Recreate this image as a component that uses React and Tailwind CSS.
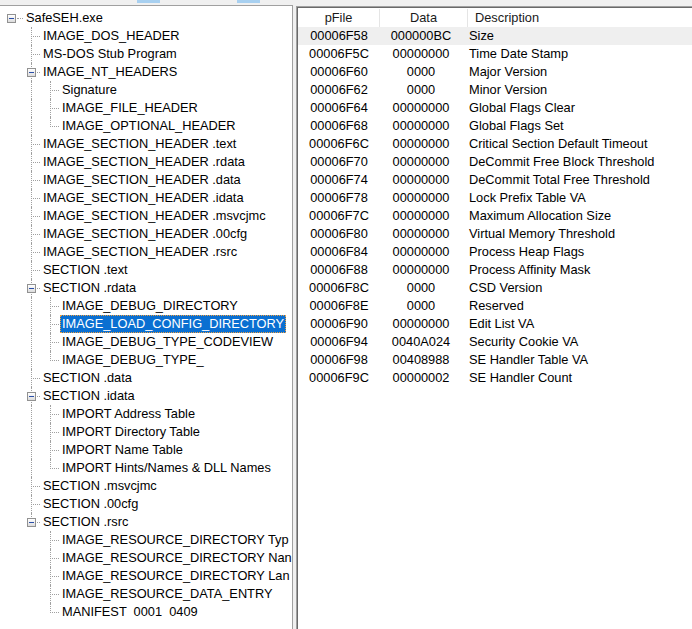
const FONT = { fontFamily: '"Liberation Sans", Arial, sans-serif' }

// level, label, last (among siblings), expanded, up = parent's level-1 guide goes on
const TREE = [
  { level: 0, label: 'SafeSEH.exe', expanded: true },
  { level: 1, label: 'IMAGE_DOS_HEADER' },
  { level: 1, label: 'MS-DOS Stub Program' },
  { level: 1, label: 'IMAGE_NT_HEADERS', expanded: true },
  { level: 2, label: 'Signature', up: true },
  { level: 2, label: 'IMAGE_FILE_HEADER', up: true },
  { level: 2, label: 'IMAGE_OPTIONAL_HEADER', up: true, last: true },
  { level: 1, label: 'IMAGE_SECTION_HEADER .text' },
  { level: 1, label: 'IMAGE_SECTION_HEADER .rdata' },
  { level: 1, label: 'IMAGE_SECTION_HEADER .data' },
  { level: 1, label: 'IMAGE_SECTION_HEADER .idata' },
  { level: 1, label: 'IMAGE_SECTION_HEADER .msvcjmc' },
  { level: 1, label: 'IMAGE_SECTION_HEADER .00cfg' },
  { level: 1, label: 'IMAGE_SECTION_HEADER .rsrc' },
  { level: 1, label: 'SECTION .text' },
  { level: 1, label: 'SECTION .rdata', expanded: true },
  { level: 2, label: 'IMAGE_DEBUG_DIRECTORY', up: true },
  { level: 2, label: 'IMAGE_LOAD_CONFIG_DIRECTORY', up: true, selected: true },
  { level: 2, label: 'IMAGE_DEBUG_TYPE_CODEVIEW', up: true },
  { level: 2, label: 'IMAGE_DEBUG_TYPE_', up: true, last: true },
  { level: 1, label: 'SECTION .data' },
  { level: 1, label: 'SECTION .idata', expanded: true },
  { level: 2, label: 'IMPORT Address Table', up: true },
  { level: 2, label: 'IMPORT Directory Table', up: true },
  { level: 2, label: 'IMPORT Name Table', up: true },
  { level: 2, label: 'IMPORT Hints/Names & DLL Names', up: true, last: true },
  { level: 1, label: 'SECTION .msvcjmc' },
  { level: 1, label: 'SECTION .00cfg' },
  { level: 1, label: 'SECTION .rsrc', expanded: true, last: true },
  { level: 2, label: 'IMAGE_RESOURCE_DIRECTORY Typ' },
  { level: 2, label: 'IMAGE_RESOURCE_DIRECTORY Nan' },
  { level: 2, label: 'IMAGE_RESOURCE_DIRECTORY Lan' },
  { level: 2, label: 'IMAGE_RESOURCE_DATA_ENTRY' },
  { level: 2, label: 'MANIFEST  0001  0409', last: true },
]

const ROWS = [
  ['00006F58', '000000BC', 'Size'],
  ['00006F5C', '00000000', 'Time Date Stamp'],
  ['00006F60', '0000', 'Major Version'],
  ['00006F62', '0000', 'Minor Version'],
  ['00006F64', '00000000', 'Global Flags Clear'],
  ['00006F68', '00000000', 'Global Flags Set'],
  ['00006F6C', '00000000', 'Critical Section Default Timeout'],
  ['00006F70', '00000000', 'DeCommit Free Block Threshold'],
  ['00006F74', '00000000', 'DeCommit Total Free Threshold'],
  ['00006F78', '00000000', 'Lock Prefix Table VA'],
  ['00006F7C', '00000000', 'Maximum Allocation Size'],
  ['00006F80', '00000000', 'Virtual Memory Threshold'],
  ['00006F84', '00000000', 'Process Heap Flags'],
  ['00006F88', '00000000', 'Process Affinity Mask'],
  ['00006F8C', '0000', 'CSD Version'],
  ['00006F8E', '0000', 'Reserved'],
  ['00006F90', '00000000', 'Edit List VA'],
  ['00006F94', '0040A024', 'Security Cookie VA'],
  ['00006F98', '00408988', 'SE Handler Table VA'],
  ['00006F9C', '00000002', 'SE Handler Count'],
]

function ExpandBox({ className }) {
  return (
    <div
      className={`w-[9px] h-[9px] border border-[#919191] bg-gradient-to-b from-white to-[#dcdcdc] flex items-center justify-center ${className}`}
    >
      <div className="w-[5px] h-[1px] bg-[#2b4fa8]" />
    </div>
  )
}

// pass-through cell: only an ancestor's vertical guide
function GuideCell({ on }) {
  return (
    <div className="w-[19px] h-[18px] shrink-0 flex">
      {on && <div className="ml-[10px] h-full border-l border-dotted border-[#a0a0a0]" />}
    </div>
  )
}

function OwnCell({ last, expanded }) {
  return (
    <div className="relative w-[19px] h-[18px] shrink-0">
      <div
        className={`absolute left-[10px] top-0 border-l border-dotted border-[#a0a0a0] ${last ? 'h-[10px]' : 'h-[18px]'}`}
      />
      <div className="absolute left-[10px] top-[9px] w-[9px] border-t border-dotted border-[#a0a0a0]" />
      {expanded && <ExpandBox className="absolute left-[6px] top-[5px]" />}
    </div>
  )
}

function TreeRow({ node }) {
  if (node.level === 0) {
    return (
      <div className="flex items-center h-[18px] pl-[7px]">
        <ExpandBox />
        <div className="w-[6px] ml-[1px] border-t border-dotted border-[#a0a0a0]" />
        <span className="ml-[1px] px-[2px] leading-[18px] whitespace-nowrap">{node.label}</span>
      </div>
    )
  }
  return (
    <div className="flex items-center h-[18px] pl-[21px]">
      {node.level === 2 && <GuideCell on={node.up} />}
      <OwnCell last={node.last} expanded={node.expanded} />
      <span
        className={`ml-[1px] px-[1px] h-[18px] leading-[16px] whitespace-pre border ${
          node.selected
            ? 'bg-[#0a6fd1] text-white border-dotted border-[#f0a040]'
            : 'border-transparent'
        }`}
      >
        {node.label}
      </span>
    </div>
  )
}

export default function App() {
  return (
    <div
      className="w-[692px] h-[629px] bg-[#f0f0f0] text-black text-[12.8px] overflow-hidden flex flex-col"
      style={FONT}
    >
      {/* toolbar remnants */}
      <div className="h-[5px] shrink-0 flex">
        <div className="ml-[137px] w-[23px] h-[3px] bg-[#a8d0f0]" />
        <div className="ml-[77px] w-[23px] h-[3px] bg-[#a8d0f0]" />
      </div>

      <div className="flex flex-1 min-h-0">
        {/* tree */}
        <div className="w-[293px] shrink-0 bg-white border-t border-r border-[#a0a0a0] overflow-hidden pt-[3px]">
          {TREE.map((node, i) => (
            <TreeRow key={i} node={node} />
          ))}
        </div>

        {/* list */}
        <div className="ml-[3px] mt-[1px] flex-1 min-w-0 bg-white border-l border-t border-[#a0a0a0]">
          <div className="h-full border-l border-t border-[#696969] pt-[1px]">
            <div className="grid grid-cols-[82px_88px_1fr] h-[18px] leading-[18px] text-[#1a1a1a]">
              <div className="text-center border-r border-[#e5e5e5]">pFile</div>
              <div className="text-center border-r border-[#e5e5e5]">Data</div>
              <div className="pl-[7px]">Description</div>
            </div>
            {ROWS.map(([pfile, data, desc], i) => (
              <div
                key={pfile}
                className={`grid grid-cols-[82px_82px_1fr] h-[18px] leading-[18px] ${
                  i === 0 ? 'bg-[#efefef]' : ''
                }`}
              >
                <div className="text-center">{pfile}</div>
                <div className="text-center">{data}</div>
                <div className="pl-[7px] whitespace-nowrap">{desc}</div>
              </div>
            ))}
          </div>
        </div>
      </div>
    </div>
  )
}
